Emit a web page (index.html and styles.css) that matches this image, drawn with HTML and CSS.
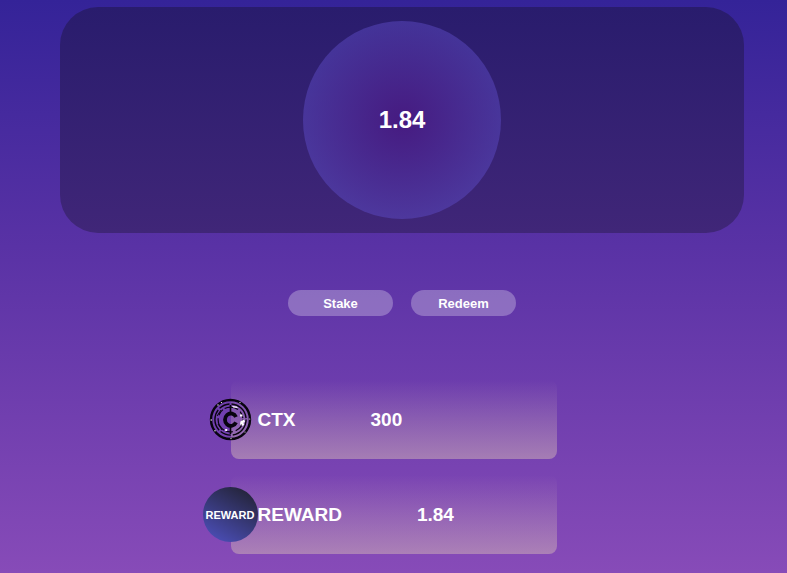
FILE: index.html
```html
<!DOCTYPE html>
<html lang="en">
<head>
    <meta charset="UTF-8">
    <meta name="viewport" content="width=device-width, initial-scale=1.0">
    <title>CTX Staking</title>
    <link rel="stylesheet" href="styles.css">
</head>
<body>
    <main>
        <section class="stake">
            <div class="panel">
                <div class="orb">1.84</div>
            </div>
            <div class="actions">
                <button type="button" class="action">Stake</button>
                <button type="button" class="action">Redeem</button>
            </div>
        </section>
        <section class="tokens">
            <div class="token">
                <svg class="coin" viewBox="0 0 55 55" aria-hidden="true">
                    <g fill="none" stroke="#08040f">
                        <circle cx="27.5" cy="27.5" r="19.5" stroke-width="2.4"/>
                        <circle cx="27.5" cy="27.5" r="15.6" stroke-width="1.4" stroke-dasharray="22 2 11 2"/>
                        <circle cx="27.5" cy="27.5" r="12.4" stroke-width="1.2" stroke-dasharray="14 3 7 2"/>
                        <path d="M27.5 13v7M27.5 35v7" stroke-width="1.6"/>
                        <path d="M33 25A5.8 6.2 0 1 0 33 30.4" stroke-width="3.8"/>
                        <path d="M14 24l4-6M15 32l4 6" stroke-width="1"/>
                    </g>
                    <g fill="#fff">
                        <path d="M29 14l4.6.4 1.6 1.6-5-.6zM37 22.4h2.4v2H37zM37.4 29.6l3.8-2 .8 2.4-1.6.8.8 2.2-2.4 1-.4-2-1.4 1zM22.2 37h2v2h-2z"/>
                        <circle cx="15" cy="13" r=".7"/>
                        <circle cx="18.5" cy="10.6" r=".7"/>
                        <circle cx="37" cy="10.6" r=".6"/>
                        <circle cx="8.2" cy="28" r=".7"/>
                        <circle cx="46.7" cy="27" r=".6"/>
                        <circle cx="12" cy="38.8" r=".7"/>
                        <circle cx="42" cy="40" r=".6"/>
                        <circle cx="28" cy="46.6" r=".6"/>
                    </g>
                </svg>
                <span class="name">CTX</span>
                <span class="amount">300</span>
            </div>
            <div class="token">
                <div class="coin reward">REWARD</div>
                <span class="name">REWARD</span>
                <span class="amount">1.84</span>
            </div>
        </section>
    </main>
</body>
</html>
```

FILE: styles.css
```css
* {
    box-sizing: border-box;
}

body {
    margin: 0;
    min-height: 100vh;
    font-family: "Liberation Sans", Arial, sans-serif;
    font-weight: bold;
    color: #fff;
    background: linear-gradient(#342398, #5932a5 43%, #874bb8);
}

.stake {
    padding: 7px 43px 0 60px;
}

.panel {
    display: flex;
    justify-content: center;
    padding: 14px;
    border-radius: 38px;
    background: linear-gradient(#291c6d, #402678);
}

.orb {
    display: flex;
    align-items: center;
    justify-content: center;
    width: 198px;
    height: 198px;
    border-radius: 50%;
    background: radial-gradient(circle closest-side, rgba(72, 26, 130, 0.9), rgba(92, 74, 195, 0.5));
    font-size: 24px;
}

.actions {
    display: flex;
    justify-content: center;
    gap: 18px;
    margin-top: 57px;
}

.action {
    width: 105px;
    height: 26px;
    padding: 0;
    border: none;
    border-radius: 13px;
    background-color: rgba(255, 255, 255, 0.28);
    color: #fff;
    font: inherit;
    font-size: 13px;
    cursor: pointer;
}

.tokens {
    display: flex;
    flex-direction: column;
    gap: 16px;
    width: 326px;
    max-width: 80%;
    margin: 64px auto 0;
    padding-bottom: 16px;
}

.token {
    display: flex;
    align-items: center;
    height: 79px;
    border-radius: 8px;
    background: linear-gradient(rgba(203, 173, 183, 0), rgba(203, 173, 183, 0.55));
    font-size: 19px;
}

/* coin hangs over the left edge of the card */
.coin {
    flex: none;
    width: 55px;
    height: 55px;
    margin-left: -28px;
}

.reward {
    display: flex;
    align-items: center;
    justify-content: center;
    border-radius: 50%;
    background: linear-gradient(210deg, #24243a 10%, #4a4db4 90%);
    font-size: 11px;
}

.amount {
    margin-left: 75px;
}
```
